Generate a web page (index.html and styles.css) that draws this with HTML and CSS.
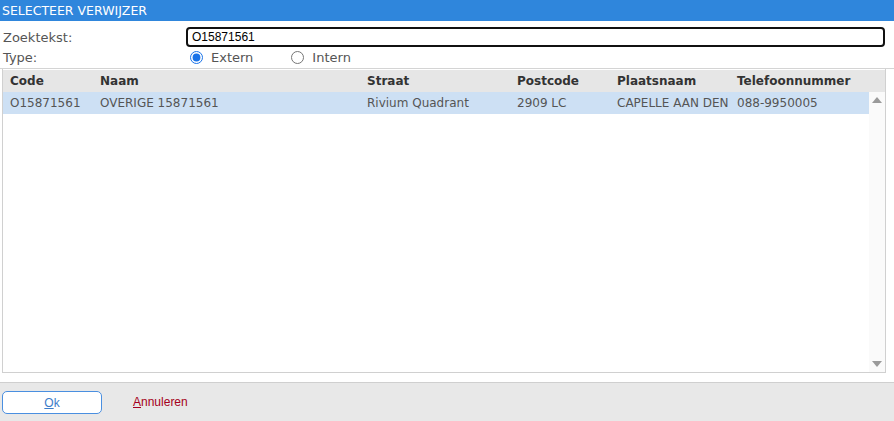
FILE: index.html
```html
<!DOCTYPE html>
<html lang="nl">
<head>
  <meta charset="UTF-8" />
  <title>Selecteer verwijzer</title>
  <link rel="stylesheet" href="styles.css">
</head>
<body>
  <div class="titlebar">SELECTEER VERWIJZER</div>

  <div class="search-form">
    <label class="field-label" for="zoektekst">Zoektekst:</label>
    <input type="text" id="zoektekst" class="search-input" value="O15871561">

    <span class="field-label">Type:</span>
    <div class="radio-group">
      <label class="radio"><input type="radio" name="type" checked> Extern</label>
      <label class="radio"><input type="radio" name="type"> Intern</label>
    </div>
  </div>

  <div class="result-grid">
    <div class="grid-head">
      <div>Code</div>
      <div>Naam</div>
      <div>Straat</div>
      <div>Postcode</div>
      <div>Plaatsnaam</div>
      <div>Telefoonnummer</div>
    </div>
    <div class="grid-body">
      <div class="rows">
        <div class="grid-row selected">
          <div>O15871561</div>
          <div>OVERIGE 15871561</div>
          <div>Rivium Quadrant</div>
          <div>2909 LC</div>
          <div>CAPELLE AAN DEN</div>
          <div>088-9950005</div>
        </div>
      </div>
      <div class="scrollbar">
        <span class="arrow up"></span>
        <span class="arrow down"></span>
      </div>
    </div>
  </div>

  <div class="footer">
    <button class="btn-ok"><u>O</u>k</button>
    <a href="#" class="link-cancel"><u>A</u>nnuleren</a>
  </div>
</body>
</html>
```

FILE: styles.css
```css
body {
  margin: 0;
  width: 894px;
  height: 421px;
  overflow: hidden;
  background-color: #fff;
  font-family: "DejaVu Sans", Verdana, sans-serif;
  color: #444;
  display: flex;
  flex-direction: column;
}

.titlebar {
  height: 21px;
  line-height: 21px;
  background-color: #2f86dc;
  color: #fff;
  font-size: 12.5px;
  padding-left: 2px;
}

.search-form {
  display: grid;
  grid-template-columns: 183px 1fr;
  grid-template-rows: 20px 20px;
  padding: 6px 9px 0 3px;
  height: 41px;
  border-bottom: 1px solid #d4d4d4;
  align-items: center;
}

.field-label {
  font-size: 13px;
  color: #555;
}

.search-input {
  box-sizing: border-box;
  height: 20px;
  width: 100%;
  margin: 0;
  border: 2px solid #111;
  border-radius: 4px;
  padding: 0 4px;
  font-family: "Liberation Sans", Arial, sans-serif;
  font-size: 12px;
  color: #000;
  outline: none;
}

.radio-group {
  display: flex;
  padding-left: 4px;
  gap: 38px;
}

.radio {
  display: flex;
  align-items: center;
  font-size: 13px;
  color: #555;
  gap: 8px;
}

.radio input {
  margin: 0;
  width: 13px;
  height: 13px;
  accent-color: #1a73e8;
}

.result-grid {
  margin: 0 8px 0 2px;
  height: 304px;
  border: 1px solid #d0d0d0;
  border-top: none;
  display: flex;
  flex-direction: column;
  padding-top: 1px;
  box-sizing: border-box;
}

.grid-head,
.grid-row {
  display: grid;
  grid-template-columns: 90px 267px 150px 100px 120px 1fr;
  font-size: 12px;
  white-space: nowrap;
}

.grid-head div,
.grid-row div {
  padding-left: 7px;
  overflow: hidden;
}

.grid-head {
  height: 22px;
  line-height: 22px;
  background-color: #e6e6e6;
  color: #333;
  font-weight: bold;
}

.grid-body {
  flex: 1;
  display: flex;
}

.rows {
  flex: 1;
}

.grid-row {
  height: 22px;
  line-height: 22px;
  color: #555;
}

.grid-row.selected {
  background-color: #cde0f4;
}

.scrollbar {
  width: 16px;
  background-color: #fafafa;
  display: flex;
  flex-direction: column;
  justify-content: space-between;
  align-items: center;
  padding: 5px 0;
}

.arrow {
  width: 0;
  height: 0;
  border-left: 5px solid transparent;
  border-right: 5px solid transparent;
}

.arrow.up {
  border-bottom: 6px solid #9a9a9a;
}

.arrow.down {
  border-top: 6px solid #9a9a9a;
}

.footer {
  margin-top: 9px;
  flex: 1;
  background-color: #e8e8e8;
  border-top: 1px solid #cfcfcf;
  display: flex;
  align-items: flex-start;
  padding: 8px 0 0 2px;
  gap: 31px;
}

.btn-ok {
  width: 100px;
  height: 23px;
  background-color: #fff;
  border: 1px solid #4a8fe0;
  border-radius: 5px;
  font-family: "Liberation Sans", Arial, sans-serif;
  font-size: 12px;
  color: #3d7cc9;
  padding: 0;
}

.link-cancel {
  font-family: "Liberation Sans", Arial, sans-serif;
  font-size: 12px;
  color: #a50021;
  text-decoration: none;
  line-height: 23px;
}
```
